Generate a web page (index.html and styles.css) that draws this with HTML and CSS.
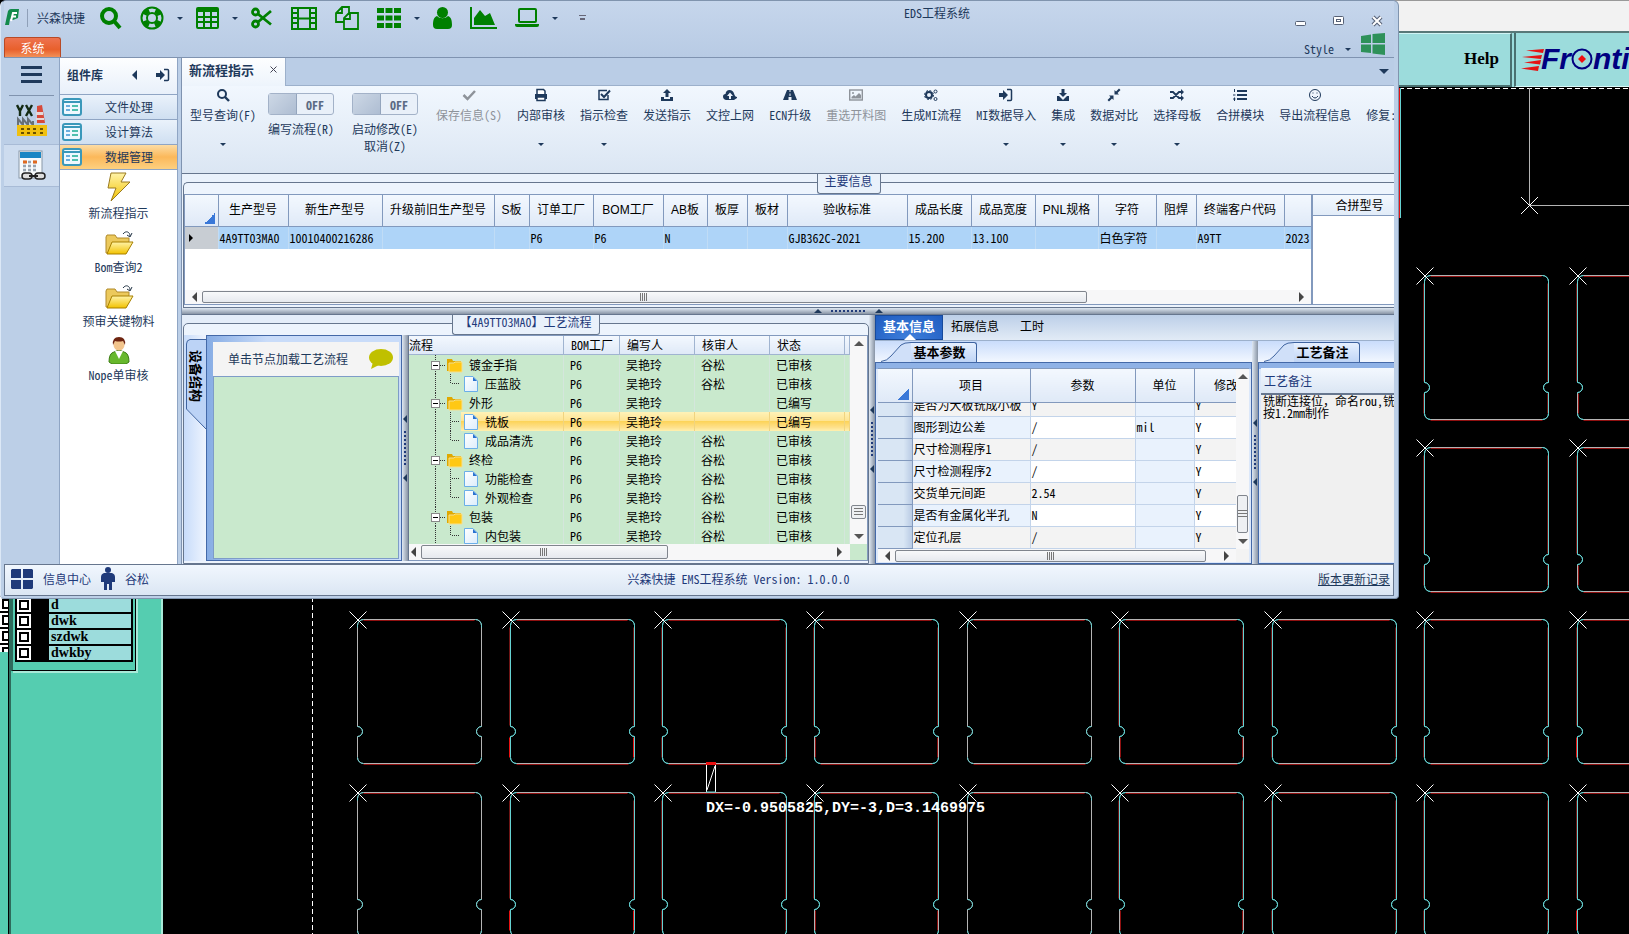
FILE: index.html
```html
<!DOCTYPE html>
<html lang="zh-CN">
<head>
<meta charset="utf-8">
<title>EDS工程系统</title>
<link rel="stylesheet" href="styles.css">
</head>
<body>
<svg class="defs" aria-hidden="true">
  <defs>
    <linearGradient id="gold" x1="0" y1="0" x2="0" y2="1"><stop offset="0" stop-color="#fff3a8"/><stop offset="1" stop-color="#f2c200"/></linearGradient>
    <linearGradient id="paper" x1="0" y1="0" x2="1" y2="1"><stop offset="0" stop-color="#fff"/><stop offset="1" stop-color="#dcecfb"/></linearGradient>
    <path id="board" d="M6 0H118a6 6 0 0 1 6 6V107a5 5 0 0 0 0 10V138a6 6 0 0 1-6 6H6a6 6 0 0 1-6-6V117a5 5 0 0 0 0-10V6a6 6 0 0 1 6-6Z"/>
    <g id="corners"><path class="c-cyan" d="M0 8V6a6 6 0 0 1 6-6M118 0a6 6 0 0 1 6 6v2M124 107a5 5 0 0 0 0 10M0 117a5 5 0 0 0 0-10M6 144a6 6 0 0 1-6-6M124 138a6 6 0 0 1-6 6"/><path class="c-white" d="M-8-8L9 9M9-8L-8 9"/></g>
    <g id="cell-gray"><use href="#board" class="c-gray"/><path class="c-red" d="M6 1H117M6 145H118"/><use href="#corners"/></g>
    <g id="cell-cyan"><path class="c-dark" d="M-1 8V106M-1 118V138M123 8V106M123 118V138"/><use href="#board" class="c-cyan"/><path class="c-gray" d="M6 0H118M6 144H118"/><path class="c-red" d="M6 1H117M6 145H118"/><use href="#corners"/></g>
    <g id="cell-red"><path class="c-dark" d="M-1 8V106M123 8V106"/><use href="#board" class="c-cyan"/><path class="c-gray" d="M6 0H118M6 144H118"/><path class="c-red" d="M6 1H117M6 145H118"/><path class="c-bright" d="M-1 118V138M123 118V138"/><use href="#corners"/></g>
    <g id="cell-mix"><path class="c-dark" d="M-1 8V106M123 8V106"/><use href="#board" class="c-cyan"/><path class="c-gray" d="M6 0H118M6 144H118M0 118V138M124 118V138"/><path class="c-red" d="M6 1H117M6 145H118M1 118V138M123 118V138"/><use href="#corners"/></g>
    <symbol id="row-folder" viewBox="0 0 58 19"><path class="dots" d="M26.500 0V19M31 10.500H36"/><rect x="22.500" y="6.500" width="8" height="8" fill="#fff" stroke="#888"/><path d="M24 10.500h5" stroke="#000"/><path d="M38 4h5l1 2h8v10H38z" fill="#e0a800"/><path d="M40 8h5l1-1h7v10H40z" fill="#ffc814" stroke="#f4e090"/></symbol>
    <symbol id="row-doc" viewBox="0 0 74 19"><path class="dots" d="M26.500 0V19M41.500 0V19M43 9.500H51"/><use href="#doc"/></symbol>
    <symbol id="row-doc-last" viewBox="0 0 74 19"><path class="dots" d="M26.500 0V19M41.500 0V10M43 9.500H51"/><use href="#doc"/></symbol>
    <g id="doc"><path d="M55.500 2.500H64L68.500 7V17.500H55.500Z" fill="url(#paper)" stroke="#6aaee8"/><path d="M64 3V7H68z" fill="#2a72d0"/></g>
    <symbol id="folder" viewBox="0 0 30 26"><path d="M2 7l1-2h8l2 3h12v3l-3 12H2z" fill="#ecc95c" stroke="#b08a2a"/><path d="M8 12h21l-7 12H3z" fill="url(#gold)" stroke="#a88000"/><path d="M19 4c3-4 7-2 7 2M23 5l3 2 2-4" fill="none" stroke="#234"/></symbol>
    <symbol id="form" viewBox="0 0 20 18"><rect x="1" y="1" width="18" height="16" rx="2" fill="#eef8ff" stroke="#3a98ba" stroke-width="2"/><path d="M2 4h16" stroke="#3a98ba" stroke-width="2"/><path d="M4 8h4M4 12h4" stroke="#6aaede" stroke-width="2"/><path d="M10 8h6M10 12h6" stroke="#4fbfae" stroke-width="2"/></symbol>
    <symbol id="signin" viewBox="0 0 14 14"><path d="M0 5h4V2l5 5-5 5V9H0z" fill="currentColor"/><path d="M8 1.500h3.500a1 1 0 0 1 1 1v9a1 1 0 0 1-1 1H8" fill="none" stroke="currentColor" stroke-width="1.500"/></symbol>
  </defs>
</svg>

<main class="desktop">
  <section class="cad" aria-label="CAD">
    <svg class="cad-drawing" aria-hidden="true">
      <path class="c-white dash" d="M312.500 597V1400"/>
      <path class="c-white dash" d="M1399 88.500H2600"/>
      <path class="c-bright" d="M1399.500 88V218"/><path class="c-cyan" d="M1400.500 88V218"/>
      <path class="c-gray" d="M1529.500 88V205.500H2600"/><path class="c-white" d="M1521 197l17 17M1538 197l-17 17"/>
      <g transform="translate(.5 .5)">
        <use href="#cell-cyan" x="1424" y="275"/><use href="#cell-mix" x="1577" y="275"/>
        <use href="#cell-cyan" x="1424" y="447"/><use href="#cell-mix" x="1577" y="447"/>
        <use href="#cell-gray" x="357" y="619"/><use href="#cell-red" x="510" y="619"/><use href="#cell-cyan" x="662" y="619"/><use href="#cell-mix" x="814" y="619"/><use href="#cell-gray" x="967" y="619"/><use href="#cell-mix" x="1119" y="619"/><use href="#cell-cyan" x="1272" y="619"/><use href="#cell-cyan" x="1424" y="619"/><use href="#cell-red" x="1577" y="619"/>
        <use href="#cell-gray" x="357" y="792"/><use href="#cell-red" x="510" y="792"/><use href="#cell-cyan" x="662" y="792"/><use href="#cell-mix" x="814" y="792"/><use href="#cell-gray" x="967" y="792"/><use href="#cell-mix" x="1119" y="792"/><use href="#cell-cyan" x="1272" y="792"/><use href="#cell-cyan" x="1424" y="792"/><use href="#cell-red" x="1577" y="792"/>
      </g>
      <path class="c-white" d="M706.500 764V792M715.500 764V792M707 790L715 766"/><path class="c-bright" d="M706 763.500h10" stroke-width="3"/><path class="c-cyan" d="M706 792h10"/>
    </svg>
    <output class="measure">DX=-0.9505825,DY=-3,D=3.1469975</output>
  </section>

  <header class="cad-top">
    <div class="cad-title"></div>
    <div class="cad-menu">
      <button class="help" type="button">Help</button>
      <div class="brand">
        <svg width="24" height="26" viewBox="0 0 24 26" aria-hidden="true"><path d="M24 3L6 4.500 23 7zM22 9L2 11l19 2zM21 14L4 16.500 20 18.500zM19 20L1 22.500 18 25z" fill="#e51414"/></svg>
        <span>Fr</span><svg width="22" height="22" viewBox="0 0 22 22" aria-hidden="true"><circle cx="11" cy="11" r="9.500" fill="none" stroke="#000080" stroke-width="2"/><path d="M11 7l4 4-4 4-4-4z" fill="#f01010"/></svg><span>nti</span>
      </div>
    </div>
  </header>

  <aside class="layers">
    <div class="layers-strip"><input type="checkbox" aria-label="层 1"><input type="checkbox" aria-label="层 2"><input type="checkbox" aria-label="层 3"><input type="checkbox" aria-label="层 4"></div>
    <div class="layers-main">
      <div class="layer-box">
        <div class="layer-list">
          <label><input type="checkbox"><span>d</span></label>
          <label><input type="checkbox"><span>dwk</span></label>
          <label><input type="checkbox"><span>szdwk</span></label>
          <label><input type="checkbox"><span>dwkby</span></label>
        </div>
      </div>
    </div>
  </aside>

  <section class="window">
    <header class="titlebar">
      <div class="title-left">
        <nav class="quick">
          <svg class="logo" width="16" height="20" viewBox="0 0 16 20"><path d="M1 17L4 3Q5 1 7 1h8l-1 9-5 2-3-1-1 6z" fill="#138a4b"/><path d="M7 13L9 5h4M8 8.500h4" fill="none" stroke="#fff" stroke-width="2"/></svg>
          <i class="sep"></i>
          <span class="company">兴森快捷</span>
          <button type="button" aria-label="查找"><svg width="22" height="24" viewBox="0 0 22 24"><circle cx="9" cy="10" r="7" fill="none" stroke="currentColor" stroke-width="4"/><path d="M14 15l6 7" stroke="currentColor" stroke-width="4"/></svg></button>
          <button type="button" aria-label="帮助"><svg width="24" height="24" viewBox="0 0 24 24"><g fill="none" stroke="currentColor"><circle cx="12" cy="12" r="10.500" stroke-width="2"/><circle cx="12" cy="12" r="5" stroke-width="2"/><circle cx="12" cy="12" r="8" stroke-width="5" stroke-dasharray="6.280 6.280" stroke-dashoffset="-3.140"/></g></svg></button>
          <i class="caret"></i>
          <button type="button" aria-label="表格"><svg width="23" height="22" viewBox="0 0 23 22"><rect width="23" height="22" rx="2" fill="currentColor"/><path d="M2 5h5v4H2zM9 5h5v4H9zM16 5h5v4h-5zM2 11h5v3H2zM9 11h5v3H9zM16 11h5v3h-5zM2 16h5v4H2zM9 16h5v4H9zM16 16h5v4h-5z" fill="#c3d4ea"/></svg></button>
          <i class="caret"></i>
          <button type="button" aria-label="剪切"><svg width="22" height="22" viewBox="0 0 22 22" fill="none" stroke="currentColor" stroke-width="2.800"><circle cx="4.500" cy="5" r="3"/><circle cx="4.500" cy="17" r="3"/><path d="M7 7l13 10.500M7 15L20 4M12 11h1"/></svg></button>
          <button type="button" aria-label="影片"><svg width="26" height="24" viewBox="0 0 26 24"><path d="M1 2h24v21H1zM7 2v21M19 2v21M7 12.500h12M1 7h6M1 12h6M1 17h6M19 7h6M19 12h6M19 17h6" fill="none" stroke="currentColor" stroke-width="2"/></svg></button>
          <button type="button" aria-label="复制"><svg width="24" height="24" viewBox="0 0 24 24"><path d="M9 16H1V7l6-6h7v6M7 1v6H1M9 23V12l5-5h9v16zM15 7v6H9" fill="none" stroke="currentColor" stroke-width="1.800"/></svg></button>
          <button type="button" aria-label="网格"><svg width="24" height="20" viewBox="0 0 24 20"><path d="M0 0h7v5H0zM8.500 0h7v5h-7zM17 0h7v5h-7zM0 7.500h7v5H0zM8.500 7.500h7v5h-7zM17 7.500h7v5h-7zM0 15h7v5H0zM8.500 15h7v5h-7zM17 15h7v5h-7z" fill="currentColor"/></svg></button>
          <i class="caret"></i>
          <button type="button" aria-label="用户"><svg width="19" height="22" viewBox="0 0 19 22" fill="currentColor"><circle cx="9.500" cy="5.500" r="5.500"/><path d="M4 9c3 3 8 3 11 0 3 1 4 4 4 9q0 4-4 4H4q-4 0-4-4c0-5 1-8 4-9z"/></svg></button>
          <button type="button" aria-label="图表"><svg width="27" height="22" viewBox="0 0 27 22"><path d="M1 0v21h26" fill="none" stroke="currentColor" stroke-width="2"/><path d="M4 18v-7l6-8 5 6 5-3 5 12z" fill="currentColor"/></svg></button>
          <button type="button" aria-label="电脑"><svg width="24" height="20" viewBox="0 0 24 20"><rect x="4" y="1" width="17" height="13" rx="1" fill="none" stroke="currentColor" stroke-width="2"/><path d="M0 16h24v1q0 2-2 2H2q-2 0-2-2z" fill="currentColor"/></svg></button>
          <i class="caret"></i>
          <i class="overflow"></i>
        </nav>
        <button class="system-tab" type="button">系统</button>
      </div>
      <h1>EDS工程系统</h1>
      <div class="title-right">
        <div class="win-buttons">
          <button type="button" aria-label="最小化"><svg width="12" height="12" viewBox="0 0 12 12"><rect x=".5" y="6.500" width="10" height="4" rx="1" fill="#fff" stroke="#556075"/></svg></button>
          <button type="button" aria-label="最大化"><svg width="12" height="12" viewBox="0 0 12 12"><rect x=".5" y="1.500" width="10" height="8" rx="1" fill="#fff" stroke="#556075"/><rect x="3.500" y="4.500" width="4" height="2" fill="#fff" stroke="#556075"/></svg></button>
          <button type="button" aria-label="关闭"><svg width="12" height="12" viewBox="0 0 12 12"><path d="M2 2l8 8M10 2l-8 8" stroke="#556075" stroke-width="4"/><path d="M2 2l8 8M10 2l-8 8" stroke="#fff" stroke-width="2"/></svg></button>
        </div>
        <div class="style-menu"><button type="button">Style <i class="caret"></i></button><svg width="24" height="22" viewBox="0 0 24 22"><path d="M0 3l10-1.500V10H0zM11.500 1L24 0v10H11.500zM0 11.500h10V20L0 19zM11.500 11.500H24V22l-12.500-1.500z" fill="#2e9159"/></svg></div>
      </div>
    </header>

    <div class="body">
      <nav class="rail">
        <button type="button" aria-label="菜单" class="rail-menu"><svg width="21" height="17" viewBox="0 0 21 17"><path d="M0 1.500h21M0 8.500h21M0 15.500h21" stroke="#1e395b" stroke-width="3"/></svg></button>
        <button type="button" aria-label="YX" class="rail-item"><svg width="32" height="32" viewBox="0 0 32 32"><path d="M1 1l3 6v5M7 1L4 7M10 1l6 11M16 1l-6 11" stroke="#142b14" stroke-width="2.400" fill="none"/><path d="M21 2l5-1 3 18h-8z" fill="#d84a3a"/><path d="M20 8h7v3h-7zM20 14h8v2h-8z" fill="#e6d8d8"/><path d="M2 22v-7l5 6v-6l5 6v-6l5 6v-4" stroke="#687078" stroke-width="2" fill="none"/><path d="M1 21h30v11H1z" fill="#f0c010"/><path d="M5 25h3M11 25h3M17 25h3M24 25h3M5 29h3M11 29h3M17 29h3M24 29h3" stroke="#6a5000" stroke-width="2"/></svg></button>
        <button type="button" aria-label="日历" class="rail-item on"><svg width="30" height="32" viewBox="0 0 30 32"><rect x="2" y="1" width="23" height="27" fill="#f6fafc" stroke="#8a98a8"/><path d="M3 2h21v6H3z" fill="#1a86c4"/><path d="M6 12h14M6 16h14M6 20h14" stroke="#98a4b0" stroke-width="2.500" stroke-dasharray="3 2"/><path d="M6 12h4M16 12h4" stroke="#e06a20" stroke-width="3"/><rect x="5" y="23" width="10" height="6" rx="3" fill="#ddd" stroke="#222" stroke-width="1.500"/><rect x="18" y="23" width="10" height="6" rx="3" fill="#ddd" stroke="#222" stroke-width="1.500"/><path d="M12 26h9" stroke="#222" stroke-width="2"/></svg></button>
      </nav>

      <aside class="library">
        <header><strong>组件库</strong><i class="tri-left"></i><svg width="14" height="14"><use href="#signin"/></svg></header>
        <button type="button" class="group"><svg width="20" height="18"><use href="#form"/></svg><span>文件处理</span></button>
        <button type="button" class="group"><svg width="20" height="18"><use href="#form"/></svg><span>设计算法</span></button>
        <button type="button" class="group active"><svg width="20" height="18"><use href="#form"/></svg><span>数据管理</span></button>
        <ul>
          <li><svg width="24" height="30" viewBox="0 0 24 30"><path d="M4 1h15l-5 9h9L4 29l5-13H1z" fill="url(#gold)" stroke="#9a7a20"/></svg><span>新流程指示</span></li>
          <li><svg width="30" height="26"><use href="#folder"/></svg><span>Bom查询2</span></li>
          <li><svg width="30" height="26"><use href="#folder"/></svg><span>预审关键物料</span></li>
          <li><svg width="22" height="28" viewBox="0 0 22 28"><path d="M1 26q0-9 5-10l5-2 5 2q5 1 5 10l-3 2H4z" fill="#67b82c" stroke="#3b7d12"/><path d="M7 15l4 8 4-8z" fill="#fff"/><circle cx="11" cy="9" r="5.500" fill="#f2c48c"/><path d="M5 9q-1-8 6-8t6 8l-2-4q-4 1-8 0z" fill="#6e2410"/></svg><span>Nope单审核</span></li>
        </ul>
      </aside>

      <div class="work">
        <div class="doc-tabs"><button type="button" class="doc-tab">新流程指示 <svg width="7" height="7" viewBox="0 0 7 7"><path d="M.5.5l6 6M6.500.5l-6 6" stroke="#445" fill="none"/></svg></button><i class="tri-down"></i></div>
        <div class="ribbon">
          <button type="button" class="tool"><svg width="14" height="14" viewBox="0 0 14 14"><circle cx="6" cy="6" r="4" fill="none" stroke="currentColor" stroke-width="2"/><path d="M9 9l4 4" stroke="currentColor" stroke-width="2.400"/></svg><span>型号查询(F)</span><i class="caret"></i></button>
          <label class="tool-toggle"><span class="switch"><input type="checkbox"><b>OFF</b></span><span>编写流程(R)</span></label>
          <label class="tool-toggle"><span class="switch"><input type="checkbox"><b>OFF</b></span><span>启动修改(E)</span><span>取消(Z)</span></label>
          <button type="button" class="tool" disabled><svg width="14" height="14" viewBox="0 0 14 14"><path d="M1.500 7l4 4L13 3" fill="none" stroke="currentColor" stroke-width="2.500"/></svg><span>保存信息(S)</span></button>
          <button type="button" class="tool"><svg width="14" height="14" viewBox="0 0 14 14"><path d="M3 6V1.500h6.500L11 3v3M3 9v3.500h8V9z" fill="#fff" stroke="currentColor" stroke-width="1.500"/><path d="M1 6h12v5h-2V9H3v2H1z" fill="currentColor"/></svg><span>内部审核</span><i class="caret"></i></button>
          <button type="button" class="tool"><svg width="14" height="14" viewBox="0 0 14 14"><path d="M11 7v4.500H2v-9h8" fill="none" stroke="currentColor" stroke-width="1.500"/><path d="M4 6l3 3 6-6.500" fill="none" stroke="currentColor" stroke-width="2"/></svg><span>指示检查</span><i class="caret"></i></button>
          <button type="button" class="tool"><svg width="14" height="14" viewBox="0 0 14 14"><path d="M7 1l4 4H8.500v4h-3V5H3zM1 9h3v2h6V9h3v4H1z" fill="currentColor"/></svg><span>发送指示</span></button>
          <button type="button" class="tool"><svg width="14" height="14" viewBox="0 0 14 14"><path d="M3 12Q0 11 0 8.500T2.500 6Q3 2 6.500 2T11 5.500 14 9t-3 3z" fill="currentColor"/><path d="M7 4.500L10 8H8v3H6V8H4z" fill="#eef4fc"/></svg><span>文控上网</span></button>
          <button type="button" class="tool"><svg width="14" height="14" viewBox="0 0 14 14"><path d="M4 2h6l4 10H8.500V9h-3v3H0z" fill="currentColor"/><path d="M7 2v2M7 5.500V8" stroke="#eef4fc"/></svg><span>ECN升级</span></button>
          <button type="button" class="tool" disabled><svg width="14" height="14" viewBox="0 0 14 14"><rect x=".7" y="2" width="12.600" height="10" fill="none" stroke="currentColor" stroke-width="1.400"/><path d="M2.500 10.500V9L5 7l1.500 1.500L10 5l2 2v3.500z" fill="currentColor"/><circle cx="4" cy="5" r="1" fill="currentColor"/></svg><span>重选开料图</span></button>
          <button type="button" class="tool"><svg width="14" height="14" viewBox="0 0 14 14" fill="none" stroke="currentColor"><circle cx="5" cy="7" r="3" stroke-width="2"/><circle cx="5" cy="7" r="4.500" stroke-dasharray="2 1.530"/><circle cx="11.500" cy="3.500" r="1.500"/><circle cx="11.500" cy="11" r="1.500"/></svg><span>生成MI流程</span></button>
          <button type="button" class="tool"><svg width="14" height="14"><use href="#signin"/></svg><span>MI数据导入</span><i class="caret"></i></button>
          <button type="button" class="tool"><svg width="14" height="14" viewBox="0 0 14 14"><path d="M7 9L3 5h2.500V1h3v4H11zM1 8h2l4 4 4-4h2v5H1z" fill="currentColor"/></svg><span>集成</span><i class="caret"></i></button>
          <button type="button" class="tool"><svg width="14" height="14" viewBox="0 0 14 14"><path d="M7.500 2v4.500H12L10.500 5l3-3L12 .5l-3 3zM6.500 12V7.500H2L3.500 9l-3 3L2 13.500l3-3z" fill="currentColor"/></svg><span>数据对比</span><i class="caret"></i></button>
          <button type="button" class="tool"><svg width="14" height="14" viewBox="0 0 14 14"><path d="M0 4h3l6 6h3M0 10h3l6-6h3" fill="none" stroke="currentColor" stroke-width="1.800"/><path d="M11 1l3 3-3 3zM11 7l3 3-3 3z" fill="currentColor"/></svg><span>选择母板</span><i class="caret"></i></button>
          <button type="button" class="tool"><svg width="14" height="14" viewBox="0 0 14 14"><path d="M4 3h10M4 7h10M4 11h10" stroke="currentColor" stroke-width="2"/><path d="M1.500 1v3M0 7h2.500M0 11h2.500M1.500 9.500V13" stroke="currentColor"/></svg><span>合拼模块</span></button>
          <button type="button" class="tool"><svg width="14" height="14" viewBox="0 0 14 14"><circle cx="7" cy="7" r="5.500" fill="none" stroke="currentColor"/><path d="M4 8q3 4 6 0" fill="none" stroke="currentColor"/><path d="M4.500 4.500h1v1h-1zM8.500 4.500h1v1h-1z" fill="currentColor"/></svg><span>导出流程信息</span></button>
          <button type="button" class="tool"><i class="tool-blank"></i><span>修复:</span></button>
        </div>

        <section class="main-info">
          <h2 class="badge badge-main">主要信息</h2>
          <div class="frame">
            <div class="grid-row">
              <div class="grid-box">
                <table class="grid">
                  <colgroup><col class="w33"><col class="w70"><col class="w94"><col class="w112"><col class="w35"><col class="w64"><col class="w70"><col class="w44"><col class="w40"><col class="w40"><col class="w120"><col class="w64"><col class="w64"><col class="w63"><col class="w58"><col class="w40"><col class="w88"><col class="w64"></colgroup>
                  <thead><tr><th class="corner"></th><th>生产型号</th><th>新生产型号</th><th>升级前旧生产型号</th><th>S板</th><th>订单工厂</th><th>BOM工厂</th><th>AB板</th><th>板厚</th><th>板材</th><th>验收标准</th><th>成品长度</th><th>成品宽度</th><th>PNL规格</th><th>字符</th><th>阻焊</th><th>终端客户代码</th><th></th></tr></thead>
                  <tbody><tr><td class="marker"></td><td>4A9TT03MA0</td><td>10010400216286</td><td></td><td></td><td>P6</td><td>P6</td><td>N</td><td></td><td></td><td>GJB362C-2021</td><td>15.200</td><td>13.100</td><td></td><td>白色字符</td><td></td><td>A9TT</td><td>2023</td></tr></tbody>
                </table>
                <div class="hbar"><i class="tri-left"></i><div class="track"><div class="thumb thumb-main"></div></div><i class="tri-right"></i></div>
              </div>
              <div class="side-box"><div class="side-head">合拼型号</div></div>
            </div>
          </div>
        </section>

        <div class="hsplit"><i class="tri-up"></i><i class="dots-h"></i><i class="tri-up"></i></div>

        <div class="lower">
          <section class="process">
            <h2 class="badge">【4A9TT03MA0】工艺流程</h2>
            <div class="frame">
              <div class="process-row">
                <div class="device">
                  <div class="vtab-col"><svg class="vtab" width="22" height="92" viewBox="0 0 22 92"><path d="M22 1H6Q3 1 3 5V70L22 90z" fill="#bcd3f6"/><path d="M22 .5H6Q2.500 1 2.500 5V70L22 90" fill="none" stroke="#3f64a0"/></svg><button type="button">设备结构</button></div>
                  <div class="device-panel">
                    <div class="device-head"><span>单击节点加载工艺流程</span><svg width="24" height="20" viewBox="0 0 24 20"><ellipse cx="12" cy="8.500" rx="12" ry="8.500" fill="#c0c000"/><path d="M4 13l-2 7 8-4z" fill="#c0c000"/></svg></div>
                    <div class="device-list"></div>
                  </div>
                </div>
                <div class="vsplit"><i class="tri-left"></i><i class="dots-v"></i><i class="tri-left"></i></div>
                <div class="tree-box">
                  <div class="tree-main">
                    <div class="tree-view">
                      <table class="tree">
                        <colgroup><col><col class="w56"><col class="w75"><col class="w75"><col class="w75"><col class="w5"></colgroup>
                        <thead><tr><th class="first">流程</th><th>BOM工厂</th><th>编写人</th><th>核审人</th><th>状态</th><th></th></tr></thead>
                        <tbody>
                          <tr><td><div><svg width="58" height="19"><use href="#row-folder"/></svg>镀金手指</div></td><td>P6</td><td>吴艳玲</td><td>谷松</td><td>已审核</td><td></td></tr>
                          <tr><td><div><svg width="74" height="19"><use href="#row-doc-last"/></svg>压蓝胶</div></td><td>P6</td><td>吴艳玲</td><td>谷松</td><td>已审核</td><td></td></tr>
                          <tr><td><div><svg width="58" height="19"><use href="#row-folder"/></svg>外形</div></td><td>P6</td><td>吴艳玲</td><td></td><td>已编写</td><td></td></tr>
                          <tr class="selected"><td><div><svg width="74" height="19"><use href="#row-doc"/></svg>铣板</div></td><td>P6</td><td>吴艳玲</td><td></td><td>已编写</td><td></td></tr>
                          <tr><td><div><svg width="74" height="19"><use href="#row-doc-last"/></svg>成品清洗</div></td><td>P6</td><td>吴艳玲</td><td>谷松</td><td>已审核</td><td></td></tr>
                          <tr><td><div><svg width="58" height="19"><use href="#row-folder"/></svg>终检</div></td><td>P6</td><td>吴艳玲</td><td>谷松</td><td>已审核</td><td></td></tr>
                          <tr><td><div><svg width="74" height="19"><use href="#row-doc"/></svg>功能检查</div></td><td>P6</td><td>吴艳玲</td><td>谷松</td><td>已审核</td><td></td></tr>
                          <tr><td><div><svg width="74" height="19"><use href="#row-doc-last"/></svg>外观检查</div></td><td>P6</td><td>吴艳玲</td><td>谷松</td><td>已审核</td><td></td></tr>
                          <tr><td><div><svg width="58" height="19"><use href="#row-folder"/></svg>包装</div></td><td>P6</td><td>吴艳玲</td><td>谷松</td><td>已审核</td><td></td></tr>
                          <tr><td><div><svg width="74" height="19"><use href="#row-doc-last"/></svg>内包装</div></td><td>P6</td><td>吴艳玲</td><td>谷松</td><td>已审核</td><td></td></tr>
                        </tbody>
                      </table>
                    </div>
                    <div class="vbar"><i class="tri-up"></i><div class="track"><div class="thumb thumb-tree"></div></div><i class="tri-down"></i></div>
                  </div>
                  <div class="tree-foot"><div class="hbar"><i class="tri-left"></i><div class="track"><div class="thumb thumb-treeh"></div></div><i class="tri-right"></i></div></div>
                </div>
              </div>
            </div>
          </section>

          <div class="vsplit"><i class="tri-left"></i><i class="dots-v"></i><i class="tri-left"></i></div>

          <section class="details">
            <nav class="detail-tabs"><button type="button" class="on">基本信息</button><button type="button">拓展信息</button><button type="button">工时</button></nav>
            <div class="detail-row">
              <div class="params">
                <div class="sub-tabs"><svg width="30" height="20" viewBox="0 0 30 20"><path d="M0 20Q6 19 10 14L20 3Q23 .5 30 .5V20z" fill="#c8dbf8"/><path d="M0 19.500Q6 19 10 14L20 3Q23 .5 30 .5" fill="none" stroke="#3f64a0"/></svg><button type="button">基本参数</button></div>
                <div class="sub-body">
                  <div class="params-main">
                    <div class="params-view">
                      <table class="param">
                        <colgroup><col class="w34"><col class="w118"><col class="w105"><col class="w59"><col class="w64"></colgroup>
                        <thead><tr><th class="corner"></th><th>项目</th><th>参数</th><th>单位</th><th>修改</th></tr></thead>
                        <tbody>
                          <tr class="cut"><th></th><td><div><span>是否为大板铣成小板</span></div></td><td><div><span>Y</span></div></td><td></td><td><div><span>Y</span></div></td></tr>
                          <tr class="alt"><th></th><td>图形到边公差</td><td>/</td><td>mil</td><td>Y</td></tr>
                          <tr><th></th><td>尺寸检测程序1</td><td>/</td><td></td><td>Y</td></tr>
                          <tr class="alt"><th></th><td>尺寸检测程序2</td><td>/</td><td></td><td>Y</td></tr>
                          <tr><th></th><td>交货单元间距</td><td>2.54</td><td></td><td>Y</td></tr>
                          <tr class="alt"><th></th><td>是否有金属化半孔</td><td>N</td><td></td><td>Y</td></tr>
                          <tr><th></th><td>定位孔层</td><td>/</td><td></td><td>Y</td></tr>
                        </tbody>
                      </table>
                    </div>
                    <div class="vbar"><i class="tri-up"></i><div class="track"><div class="thumb thumb-param"></div></div><i class="tri-down"></i></div>
                  </div>
                  <div class="params-foot"><div class="hbar"><i class="tri-left"></i><div class="track"><div class="thumb thumb-paramh"></div></div><i class="tri-right"></i></div></div>
                </div>
              </div>
              <div class="vsplit"><i class="tri-left"></i><i class="dots-v"></i><i class="tri-left"></i></div>
              <div class="remark">
                <div class="sub-tabs"><svg width="30" height="20" viewBox="0 0 30 20"><path d="M0 20Q6 19 10 14L20 3Q23 .5 30 .5V20z" fill="#c8dbf8"/><path d="M0 19.500Q6 19 10 14L20 3Q23 .5 30 .5" fill="none" stroke="#3f64a0"/></svg><button type="button">工艺备注</button></div>
                <div class="sub-body">
                  <label class="remark-head" for="note">工艺备注</label>
                  <textarea id="note" wrap="off">铣断连接位，命名rou,铣
按1.2mm制作</textarea>
                </div>
              </div>
            </div>
          </section>
        </div>
      </div>
    </div>

    <footer class="status">
      <div class="status-left">
        <svg width="22" height="20" viewBox="0 0 22 20"><path d="M1 0h9v9H0V1zM12 0h9l1 1v8H12zM0 11h10v9H1l-1-1zM12 11h10v8l-1 1h-9z" fill="#1f3a7a"/></svg><span>信息中心</span>
        <svg width="14" height="24" viewBox="0 0 14 24"><circle cx="7" cy="3" r="3" fill="#1f3a7a"/><path d="M3 6h8q3 1 3 4v5h-3v8H8v-6H6v6H3v-8H0v-5q0-3 3-4z" fill="#1f3a7a"/></svg><span>谷松</span>
      </div>
      <span class="version">兴森快捷 EMS工程系统 Version: 1.0.0.0</span>
      <a href="#changes">版本更新记录</a>
    </footer>
  </section>
</main>
</body>
</html>
```
FILE: styles.css
```css
* { box-sizing: border-box; }
html, body { margin: 0; height: 100%; }
body { background: #000; overflow: hidden; color: #1e395b; font: 12px/16px "Noto Sans Mono CJK SC", "Noto Sans CJK SC", sans-serif; }
button { margin: 0; padding: 0; border: 0; background: none; color: inherit; font: inherit; white-space: nowrap; }
h1, h2, ul { margin: 0; padding: 0; font: inherit; list-style: none; }
svg { display: block; flex: none; }
i { flex: none; }
table { border-collapse: collapse; table-layout: fixed; }
th, td { padding: 0; font-weight: normal; white-space: nowrap; overflow: hidden; color: #000; }
.defs { position: absolute; width: 0; height: 0; }

.desktop { position: relative; height: 100%; overflow: hidden; }

/* CAD canvas */
.cad, .cad-drawing { position: absolute; inset: 0; width: 100%; height: 100%; }
.cad-drawing path, .cad-drawing use { fill: none; }
.c-gray, .c-white, .c-cyan, .c-red, .c-dark, .c-bright { fill: none; }
.c-gray { stroke: #b4b4b4; }
.c-white { stroke: #fff; }
.c-cyan { stroke: #66d2d2; }
.c-red { stroke: #901010; }
.c-dark { stroke: #6e1414; }
.c-bright { stroke: #e81010; }
.dash { stroke-dasharray: 5 3; }
.measure { position: absolute; left: 706px; top: 800px; color: #fff; font: bold 15px/18px "Liberation Mono", monospace; }
.cad-top { position: absolute; top: 0; left: 1390px; right: 0; }
.cad-title { height: 31px; background: #f2f2f2; border-top: 1px solid #999; }
.cad-menu { display: flex; height: 56px; background: #9cdcdc; border-top: 2px solid #587878; }
.help { width: 122px; padding: 0 11px 2px 0; text-align: right; color: #000; font: bold 17px/20px "Liberation Serif", serif; border: 1px solid #cff4f4; border-right: 2px solid #4a7070; border-bottom: 2px solid #4a7070; }
.brand { flex: 1; display: flex; align-items: center; margin-left: 2px; padding: 0 0 2px 4px; overflow: hidden; border-left: 2px solid #4a7070; border-bottom: 1px solid #d8f8f8; color: #000080; font: italic bold 30px/40px "Liberation Sans", sans-serif; }
.brand span:first-of-type { margin-left: -3px; }

/* layer panel behind the window */
.layers { position: absolute; left: 0; top: 588px; bottom: 0; width: 163px; display: flex; background: #55cdb0; border-right: 2px solid #a8ead8; }
.layers input { appearance: none; flex: none; margin: 0; width: 14px; height: 14px; background: linear-gradient(#fff, #fff) center / 6px 6px no-repeat, #000; border: 2px solid #fff; }
.layers-strip { width: 9px; padding-top: 9px; height: 76px; overflow: hidden; background: #000; display: flex; flex-direction: column; gap: 2px; border-bottom: 12px solid #55cdb0; }
.layers-main { flex: 1; border-left: 2px solid #2f6b5c; box-shadow: -1px 0 #000; }
.layer-box { width: 125px; height: 83px; padding: 0 2px 9px; border: 1px solid #000; border-left: 2px solid #2f6b5c; box-shadow: 2px 2px #a8ead8; }
.layer-list { background: #000; padding: 8px 2px 1px; }
.layer-list label { display: flex; align-items: center; gap: 18px; height: 16px; }
.layer-list span { flex: 1; height: 14px; padding-left: 2px; background: #9cdcdc; color: #000; font: bold 14px/13px "Liberation Serif", serif; }

/* window */
.window { position: absolute; top: 0; left: 0; right: 230px; padding: 0 4px 2px 3px; background: #bccfe7; border: 1px solid #8094ae; border-left-color: #dce8f6; border-radius: 6px 6px 4px 4px; overflow: hidden; }
.titlebar { display: flex; height: 56px; background: linear-gradient(#c6d6ec, #b8cbe4); }
.title-left { display: flex; flex-direction: column; }
.quick { display: flex; align-items: center; gap: 18px; height: 36px; padding-bottom: 2px; color: #008000; }
.logo { margin-right: -11px; }
.sep { width: 1px; height: 18px; background: #8fa0b8; margin-right: -9px; }
.company { color: #1e395b; margin-right: -3px; }
.caret { width: 0; height: 0; border: 3px solid transparent; border-top-color: #1e395b; border-bottom: 0; }
.quick .caret { margin: 0 -5px; }
.overflow { width: 7px; height: 6px; margin-left: 8px; border-top: 1px solid #667; background: linear-gradient(#667, #667) center 2px / 5px 2px no-repeat; }
.system-tab { width: 57px; height: 20px; color: #fff; background: linear-gradient(#ee7350, #e8602c 60%, #f29058); border: 1px solid #b84a26; border-bottom: 0; border-radius: 3px 3px 0 0; line-height: 18px; }
.titlebar h1 { flex: 1; text-align: center; padding-top: 4px; }
.title-right { width: 106px; display: flex; flex-direction: column; }
.win-buttons { display: flex; gap: 26px; padding: 7px 0 0 7px; height: 32px; }
.style-menu { display: flex; gap: 10px; padding-left: 16px; align-items: flex-start; }
.style-menu button { display: flex; align-items: center; gap: 11px; padding-top: 8px; }

.body { display: grid; grid-template-columns: 56px 118px 1fr; border-top: 1px solid #7f93b0; }
.rail { display: flex; flex-direction: column; align-items: stretch; background: #bccfe7; border-right: 1px solid #8fa5c4; }
.rail button { display: flex; justify-content: center; align-items: center; }
.rail-menu { height: 38px; margin: 0 5px; padding-bottom: 4px; border-bottom: 1px solid #8093ae; }
.rail-item { height: 48px; }
.rail-item.on { height: 43px; background: #cddcef; border: solid #a8bbd6; border-width: 1px 0; }
.library { background: #fff; border-right: 1px solid #8fa5c4; }
.library header { display: flex; align-items: center; height: 36px; padding: 0 7px 3px 7px; background: linear-gradient(#fdfeff, #e8f0fa); }
.library header strong { flex: 1; }
.library header svg { margin-left: 19px; }
.tri-left, .tri-right { width: 0; height: 0; border: 5px solid transparent; }
.tri-left { border-right-color: #1e395b; border-left: 0; }
.tri-right { border-left-color: #1e395b; border-right: 0; }
.group { display: flex; align-items: center; width: 100%; height: 25px; padding-left: 2px; background: linear-gradient(#eaf2fb, #cfdff1); border-top: 1px solid #8fa5c4; }
.group span { flex: 1; padding-right: 1px; text-align: center; }
.group.active { background: linear-gradient(#fcdca4, #fbb85a 50%, #fdd080); border-bottom: 1px solid #8fa5c4; height: 26px; }
.library li { display: flex; flex-direction: column; align-items: center; justify-content: flex-end; height: 54px; gap: 3px; }
.library li:first-child { height: 51px; }

.work { min-width: 0; margin-left: 3px; border-left: 1px solid #7f93b0; background: #eaf2fc; }
.doc-tabs { display: flex; justify-content: space-between; align-items: flex-start; height: 28px; background: #bacde6; box-shadow: inset 0 -1px #9cb0cb; }
.doc-tab { display: flex; align-items: center; gap: 16px; height: 28px; padding: 0 8px 5px 7px; background: linear-gradient(#fdfeff, #edf4fc); font: bold 13px/18px "Noto Sans CJK SC", sans-serif; border-right: 1px solid #9cb0cb; }
.tri-down, .tri-up { width: 0; height: 0; border: 5px solid transparent; }
.tri-down { border-top-color: #1e395b; border-bottom: 0; }
.tri-up { border-bottom-color: #1e395b; border-top: 0; }
.doc-tabs .tri-down { margin: 11px 5px; }
.ribbon { display: flex; align-items: flex-start; gap: 15px; height: 87px; padding: 2px 0 0 8px; overflow: hidden; background: linear-gradient(#f1f7fe, #dbe6f3); }
.tool { display: flex; flex-direction: column; align-items: center; flex: none; }
.tool:first-child { margin-right: -3px; }
.tool span { margin-top: 5px; }
.tool .caret { margin-top: 20px; }
.tool:disabled { color: #8e939a; }
.tool-blank { height: 14px; }
.tool-toggle { display: flex; flex-direction: column; align-items: center; flex: none; line-height: 17px; padding-top: 5px; margin-right: 3px; }
.switch { display: flex; align-items: center; width: 66px; height: 22px; margin-bottom: 5px; background: #e9f0f9; border: 1px solid #a3b2c8; border-radius: 3px; color: #5c6b84; }
.switch input { appearance: none; width: 28px; height: 20px; margin: 0; background: linear-gradient(135deg, #cdd8e6, #aebdd2); border-right: 1px solid #94a5bd; }
.switch b { flex: 1; text-align: center; }

.frame { margin: 8px 0 0 1px; border: solid #66768e; border-width: 1px 0 0 1px; border-radius: 5px 0 0 0; background: #edf4fd; }
.badge { position: absolute; left: 50%; top: 0; transform: translateX(-50%); z-index: 1; padding: 0 7px 5px; line-height: 14px; color: #1f3a7a; background: #e9f1fb; border: 1px solid #66768e; border-top: 0; border-radius: 0 0 3px 3px; white-space: nowrap; }
.badge-main { left: 55%; }
.main-info { position: relative; border-top: 1px solid #66768e; }
.main-info .frame { padding: 11px 0 2px; border-bottom: 1px solid #66768e; }
.grid-row { display: flex; }
.grid-box { flex: 1; min-width: 0; overflow: hidden; background: #fff; border: 1px solid #8299bd; border-right-width: 2px; }
.side-box { width: 81px; background: #fff; border: solid #8299bd; border-width: 1px 0; }
.side-head { height: 21px; padding-left: 12px; text-align: center; line-height: 20px; background: linear-gradient(#f3f8fe, #e2ecf8); border-bottom: 1px solid #8299bd; color: #000; }
.grid { width: 1163px; margin-bottom: 41px; }
.grid th { height: 31px; background: linear-gradient(#f3f8fe, #dfe9f7); border: solid #8299bd; border-width: 0 1px 1px 0; font-family: "Liberation Sans", "Noto Sans CJK SC", sans-serif; }
.grid td { height: 23px; padding-left: 1px; background: #aed4f8; border-right: 1px solid #c0dcf6; }
.grid .corner, .param .corner { background: linear-gradient(135deg, transparent 50%, #3a78d8 50%) right 3px bottom 2px / 11px 11px no-repeat, linear-gradient(#f3f8fe, #dfe9f7); }
.grid .marker { background: #c8cdd3; }
.marker::before { content: ""; display: block; width: 0; margin-left: 3px; border: 4px solid transparent; border-left-color: #000; border-right: 0; }
.w5 { width: 5px; } .w33 { width: 33px; } .w34 { width: 34px; } .w35 { width: 35px; } .w40 { width: 40px; } .w44 { width: 44px; } .w56 { width: 56px; } .w58 { width: 58px; } .w59 { width: 59px; } .w63 { width: 63px; } .w64 { width: 64px; } .w70 { width: 70px; } .w75 { width: 75px; } .w88 { width: 88px; } .w94 { width: 94px; } .w105 { width: 105px; } .w112 { width: 112px; } .w118 { width: 118px; } .w120 { width: 120px; }

.hbar { display: flex; align-items: center; gap: 5px; height: 14px; padding: 0 7px; background: #f7f7f8; }
.hbar .tri-left { border-right-color: #444; }
.hbar .tri-right { border-left-color: #444; }
.vbar .tri-up { border-bottom-color: #555; }
.vbar .tri-down { border-top-color: #555; }
.track { flex: 1; align-self: stretch; }
.thumb { height: 12px; margin-top: 1px; border: 1px solid #80858d; border-radius: 2px; background: repeating-linear-gradient(90deg, #777 0 1px, transparent 1px 2px) center / 8px 8px no-repeat, linear-gradient(#f8f9fa, #e6e9ee); }
.thumb-main { width: 81%; }
.thumb-treeh { width: 60%; }
.thumb-paramh { width: 96%; }
.vbar { display: flex; flex-direction: column; align-items: center; justify-content: space-between; width: 17px; padding: 5px 1px; background: #f7f7f8; }
.vbar .track { display: flex; flex-direction: column; justify-content: flex-end; }
.vbar .thumb { background: repeating-linear-gradient(#777 0 1px, transparent 1px 3px) center / 9px 9px no-repeat, #eef0f3; }
.thumb-tree { width: 15px; height: 14px; margin-bottom: 15px; }
.thumb-param { width: 11px; height: 38px; margin-bottom: 6px; }

.hsplit { display: flex; align-items: center; justify-content: center; gap: 9px; height: 6px; padding-left: 121px; background: linear-gradient(#dfe8f2, #8894a5); }
.hsplit .tri-up, .vsplit .tri-left { border-width: 4px; }
.hsplit .tri-up { border-top-width: 0; }
.vsplit .tri-left { border-left-width: 0; }
.dots-h { width: 35px; height: 2px; background: repeating-linear-gradient(90deg, #1f3a7a 0 2px, transparent 2px 4px); }
.dots-v { width: 2px; height: 35px; background: repeating-linear-gradient(#1f3a7a 0 2px, transparent 2px 4px); }
.vsplit { display: flex; flex-direction: column; align-items: center; justify-content: center; gap: 8px; width: 6px; background: linear-gradient(90deg, #dfe8f2, #8894a5); }

.lower { display: flex; height: 250px; border-top: 1px solid #66768e; }
.process { position: relative; flex: 1; min-width: 0; display: flex; flex-direction: column; background: #e4edf9; }
.process .frame { flex: 1; min-height: 0; display: flex; flex-direction: column; padding: 11px 0 2px; border-width: 1px 1px 1px 1px; border-radius: 5px 5px 0 0; }
.process-row { flex: 1; min-height: 0; display: flex; }
.device { display: flex; width: 218px; background: linear-gradient(90deg, #c8dcfa, #eef4fe 22px); }
.vtab-col { position: relative; width: 22px; padding-top: 4px; }
.vtab-col button { position: absolute; left: 4px; top: 15px; writing-mode: vertical-rl; text-orientation: sideways; color: #000; font: bold 13px/16px "Noto Sans CJK SC", sans-serif; }
.device-panel { flex: 1; display: flex; flex-direction: column; padding: 6px 2px 1px 6px; border: 1px solid #4469a8; background: linear-gradient(90deg, #86ace4, #c9dcf9 60px); }
.device-head { display: flex; align-items: center; justify-content: space-between; height: 34px; padding: 0 6px 0 15px; background: #f4f4f4; }
.device-list { flex: 1; background: #c9e9cd; border: 1px solid #7e9cc8; }
.tree-box { flex: 1; min-width: 0; display: flex; flex-direction: column; border: 1px solid #8299bd; border-left-color: #66768e; background: #c9e9cd; }
.tree-main { flex: 1; min-height: 0; display: flex; }
.tree-view { flex: 1; min-width: 0; overflow: hidden; }
.tree { width: 100%; }
.tree th { height: 18px; padding-left: 7px; text-align: left; line-height: 17px; background: linear-gradient(#f3f8fe, #dfe9f7); border: solid #a0b4d0; border-width: 0 1px 1px 0; }
.tree th.first { padding-left: 0; }
.tree td { height: 19px; padding-left: 6px; line-height: 19px; border-right: 1px solid #d4e6dc; }
.tree td:first-child { padding-left: 0; }
.tree td div { display: flex; gap: 2px; }
.tree .selected td { background: linear-gradient(#fff2b8, #fee390 48%, #fcd45a 50%, #fee08a 80%, #fff0b0); border-color: #f0d480; }
.tree .selected td:first-child { background: linear-gradient(90deg, #c9e9cd 52px, transparent 52px), linear-gradient(#fff2b8, #fee390 48%, #fcd45a 50%, #fee08a 80%, #fff0b0); }
.dots { fill: none; stroke: #333; stroke-dasharray: 1 1; }
.tree-foot { height: 16px; padding-right: 17px; }
.tree-foot .hbar { height: 16px; padding: 0 8px 0 2px; }
.tree-foot .thumb { height: 14px; }

.details { width: 519px; display: flex; flex-direction: column; background: #e4edfa; }
.detail-tabs { display: flex; gap: 21px; height: 26px; background: linear-gradient(#bccfe8, #e2ebf6); border-bottom: 1px solid #9cb0cb; color: #000; }
.detail-tabs button { padding-bottom: 4px; }
.detail-tabs .on { position: relative; width: 68px; margin-right: -13px; color: #fff; background: radial-gradient(ellipse at bottom, #3f80dc, #1f5cc0); border: 1px solid #174a9c; font-weight: bold; font-size: 13px; }
.detail-tabs .on::after { content: ""; position: absolute; left: 28px; bottom: -1px; border: 6px solid transparent; border-top: 0; border-bottom-color: #fff; }
.detail-row { flex: 1; min-height: 0; display: flex; }
.params { width: 377px; display: flex; flex-direction: column; }
.remark { flex: 1; min-width: 0; display: flex; flex-direction: column; }
.sub-tabs { display: flex; align-items: flex-end; height: 22px; padding-left: 6px; background: linear-gradient(#c9dcfb, #f2f7ff); border-bottom: 1px solid #4469a8; }
.sub-tabs button { height: 20px; width: 66px; padding: 0 8px 1px 0; text-align: center; color: #000; font: bold 13px/18px "Noto Sans CJK SC", sans-serif; background: linear-gradient(#e6f0ff, #c0d5f6); border: solid #3f64a0; border-width: 1px 1px 0 0; border-radius: 0 3px 0 0; }
.sub-tabs svg path:first-child { fill: #d0e0f9; }
.sub-body { flex: 1; min-height: 0; display: flex; flex-direction: column; padding: 5px 2px 1px 2px; border: solid #4469a8; border-width: 0 1px 1px 1px; background: linear-gradient(#8fb2e6 6px, #dce8fa 6px); }
.params-main { flex: 1; min-height: 0; display: flex; border-top: 1px solid #8299bd; }
.params-view { flex: 1; min-width: 0; overflow: hidden; }
.param { width: 380px; }
.param thead th { height: 33px; background: linear-gradient(#f3f8fe, #dfe9f7); border: solid #8299bd; border-width: 0 1px 1px 0; }
.param tbody th { background: linear-gradient(90deg, #d9e6f4 75%, #b9cbe4); border: solid #8299bd; border-width: 0 1px 1px 0; }
.param td { height: 22px; padding-left: 1px; background: #f3f3f3; border: solid #c3d4ea; border-width: 0 1px 1px 0; }
.param td:nth-child(4), .param .alt td:nth-child(2) { background: #e9f2fd; }
.param .alt td:nth-child(3), .param .alt td:nth-child(5) { background: #fff; }
.param .cut td { height: 14px; }
.cut div { display: flex; align-items: flex-end; height: 13px; overflow: hidden; line-height: 22px; }
.params .vbar { width: 13px; }
.params-foot { height: 13px; padding-right: 13px; background: #f3f3f3; }
.params-foot .hbar { height: 13px; }
.remark .sub-body { border-right: 0; padding-right: 0; }
.remark-head { height: 27px; padding-left: 3px; line-height: 25px; color: #1f3a7a; background: linear-gradient(#f3f8fe, #dbe6f4); border-bottom: 2px solid #66768e; }
.remark textarea { flex: 1; padding: 0 0 0 2px; border: 0; resize: none; overflow: hidden; background: #f0f0f0; color: #000; font: inherit; line-height: 12px; }

.status { display: flex; align-items: center; justify-content: space-between; height: 32px; padding: 0 3px 3px 6px; background: linear-gradient(#f1f7fe, #dbe6f3); border: 1px solid #66768e; color: #1f3a7a; }
.status-left { display: flex; align-items: center; gap: 10px; width: 278px; }
.status a { width: 202px; text-align: right; color: #1e395b; }
```
